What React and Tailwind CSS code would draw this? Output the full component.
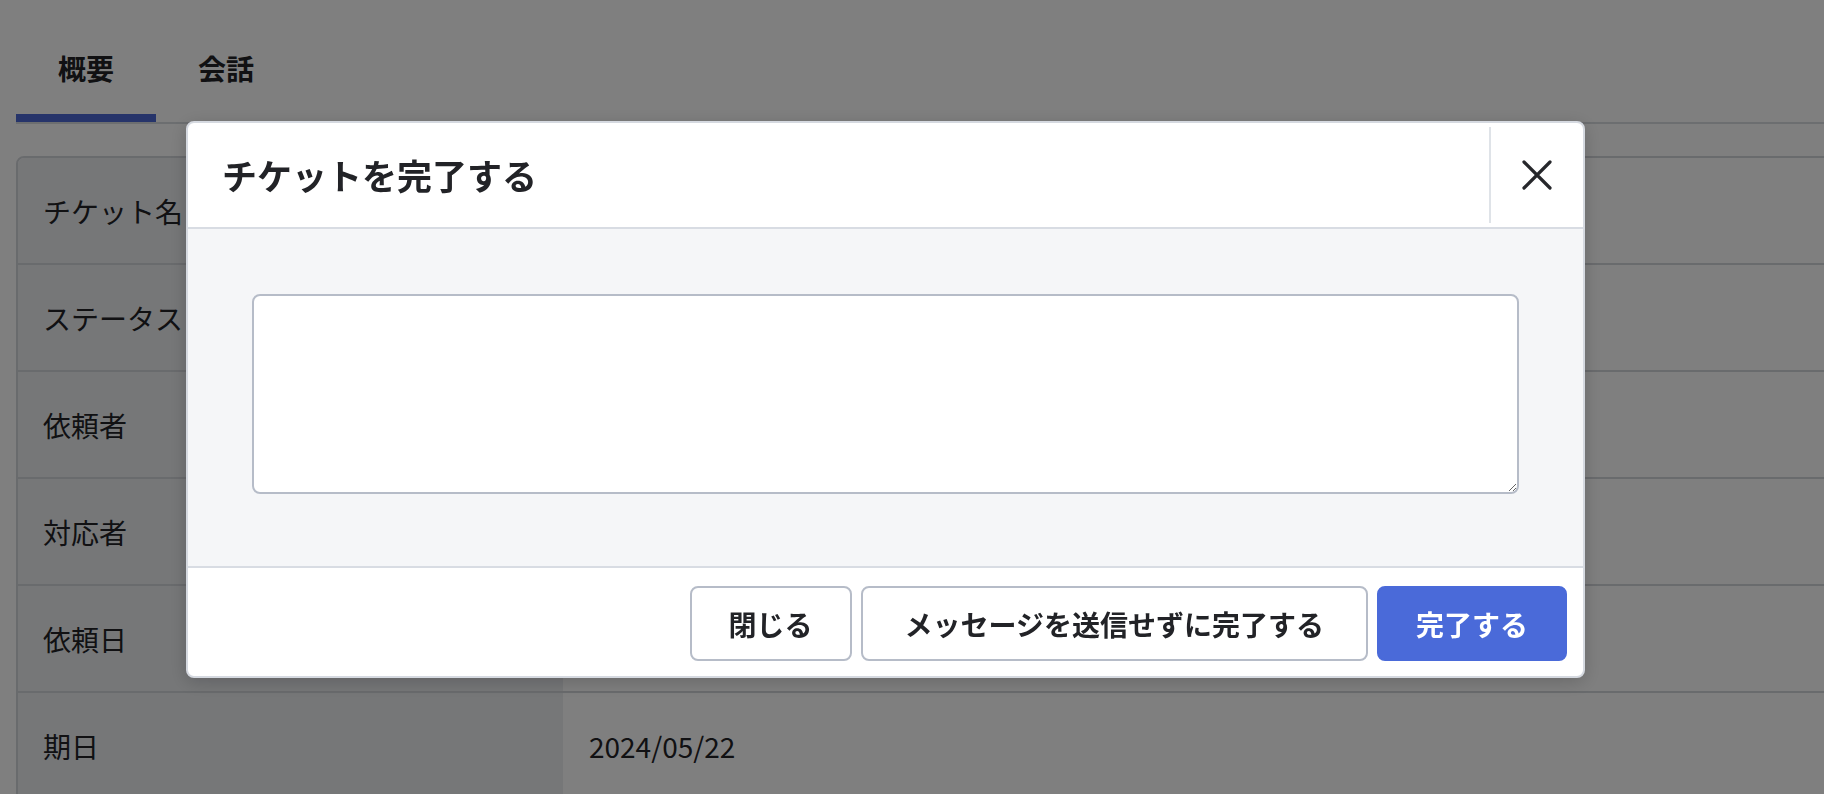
import React from "react";

const font = { fontFamily: '"Noto Sans CJK JP", "Noto Sans", sans-serif' };

const rows = [
  { label: "チケット名", value: "" },
  { label: "ステータス", value: "" },
  { label: "依頼者", value: "" },
  { label: "対応者", value: "" },
  { label: "依頼日", value: "" },
  { label: "期日", value: "2024/05/22" },
];

const CloseIcon = () => (
  <svg width="30" height="30" viewBox="0 0 30 30" fill="none">
    <path d="M2 2L28 28M28 2L2 28" stroke="#26272b" strokeWidth="3.2" strokeLinecap="round" />
  </svg>
);

const App = () => {
  return (
    <div className="relative h-screen w-full overflow-hidden bg-white text-[#222327]" style={font}>
      {/* page behind the dialog */}
      <div className="pl-[16px]">
        <div className="flex border-b-2 border-[#d9dce1]">
          <div className="px-[42px] pt-[47px] pb-[25px] border-b-[8px] border-[#4d68d4] text-[28px] leading-[42px] font-bold">
            概要
          </div>
          <div className="px-[42px] pt-[47px] pb-[25px] border-b-[8px] border-transparent text-[28px] leading-[42px] font-bold">
            会話
          </div>
        </div>

        <div className="mt-[32px] w-[1840px] rounded-[8px] border-2 border-[#d3d6db] overflow-hidden">
          {rows.map((row) => (
            <div key={row.label} className="grid grid-cols-[545px_1fr] border-b-2 border-[#d3d6db]">
              <div className="h-[105px] flex items-center pl-[25px] bg-[#eceef1] text-[28px]">
                {row.label}
              </div>
              <div className="h-[105px] flex items-center pl-[26px] text-[28px]">
                {row.value}
              </div>
            </div>
          ))}
        </div>
      </div>

      {/* overlay + dialog */}
      <div className="fixed inset-0 bg-black/50 pl-[186px] pt-[121px]">
        <div className="w-[1399px] rounded-[8px] border-2 border-[#d5d9e0] bg-white overflow-hidden shadow-[0_4px_18px_rgba(0,0,0,0.18)]">
          {/* header */}
          <div className="flex h-[106px] items-stretch border-b-2 border-[#d8dce3]">
            <h2 className="flex-1 flex items-center pl-[34px] text-[35px] font-bold text-[#222327]">
              チケットを完了する
            </h2>
            <div className="my-[4px] w-[2px] bg-[#dfe3e8]" />
            <button className="w-[92px] flex items-center justify-center">
              <CloseIcon />
            </button>
          </div>

          {/* body */}
          <div className="bg-[#f5f6f8] px-[64px] pt-[65px] pb-[72px]">
            <textarea className="block h-[200px] w-full rounded-[8px] border-2 border-[#b6bcc8] bg-white p-3 text-[28px] outline-none" />
          </div>

          {/* footer */}
          <div className="flex h-[110px] items-start justify-end gap-[9px] border-t-2 border-[#d8dce3] pt-[18px] pr-[16px]">
            <button className="h-[75px] rounded-[8px] border-2 border-[#b6bcc8] bg-white px-[37px] text-[28px] font-bold text-[#222327]">
              閉じる
            </button>
            <button className="h-[75px] rounded-[8px] border-2 border-[#b6bcc8] bg-white px-[42px] text-[28px] font-bold text-[#222327]">
              メッセージを送信せずに完了する
            </button>
            <button className="h-[75px] rounded-[8px] border-2 border-[#4a6ad9] bg-[#4a6ad9] px-[37px] text-[28px] font-bold text-white">
              完了する
            </button>
          </div>
        </div>
      </div>
    </div>
  );
};

export default App;
